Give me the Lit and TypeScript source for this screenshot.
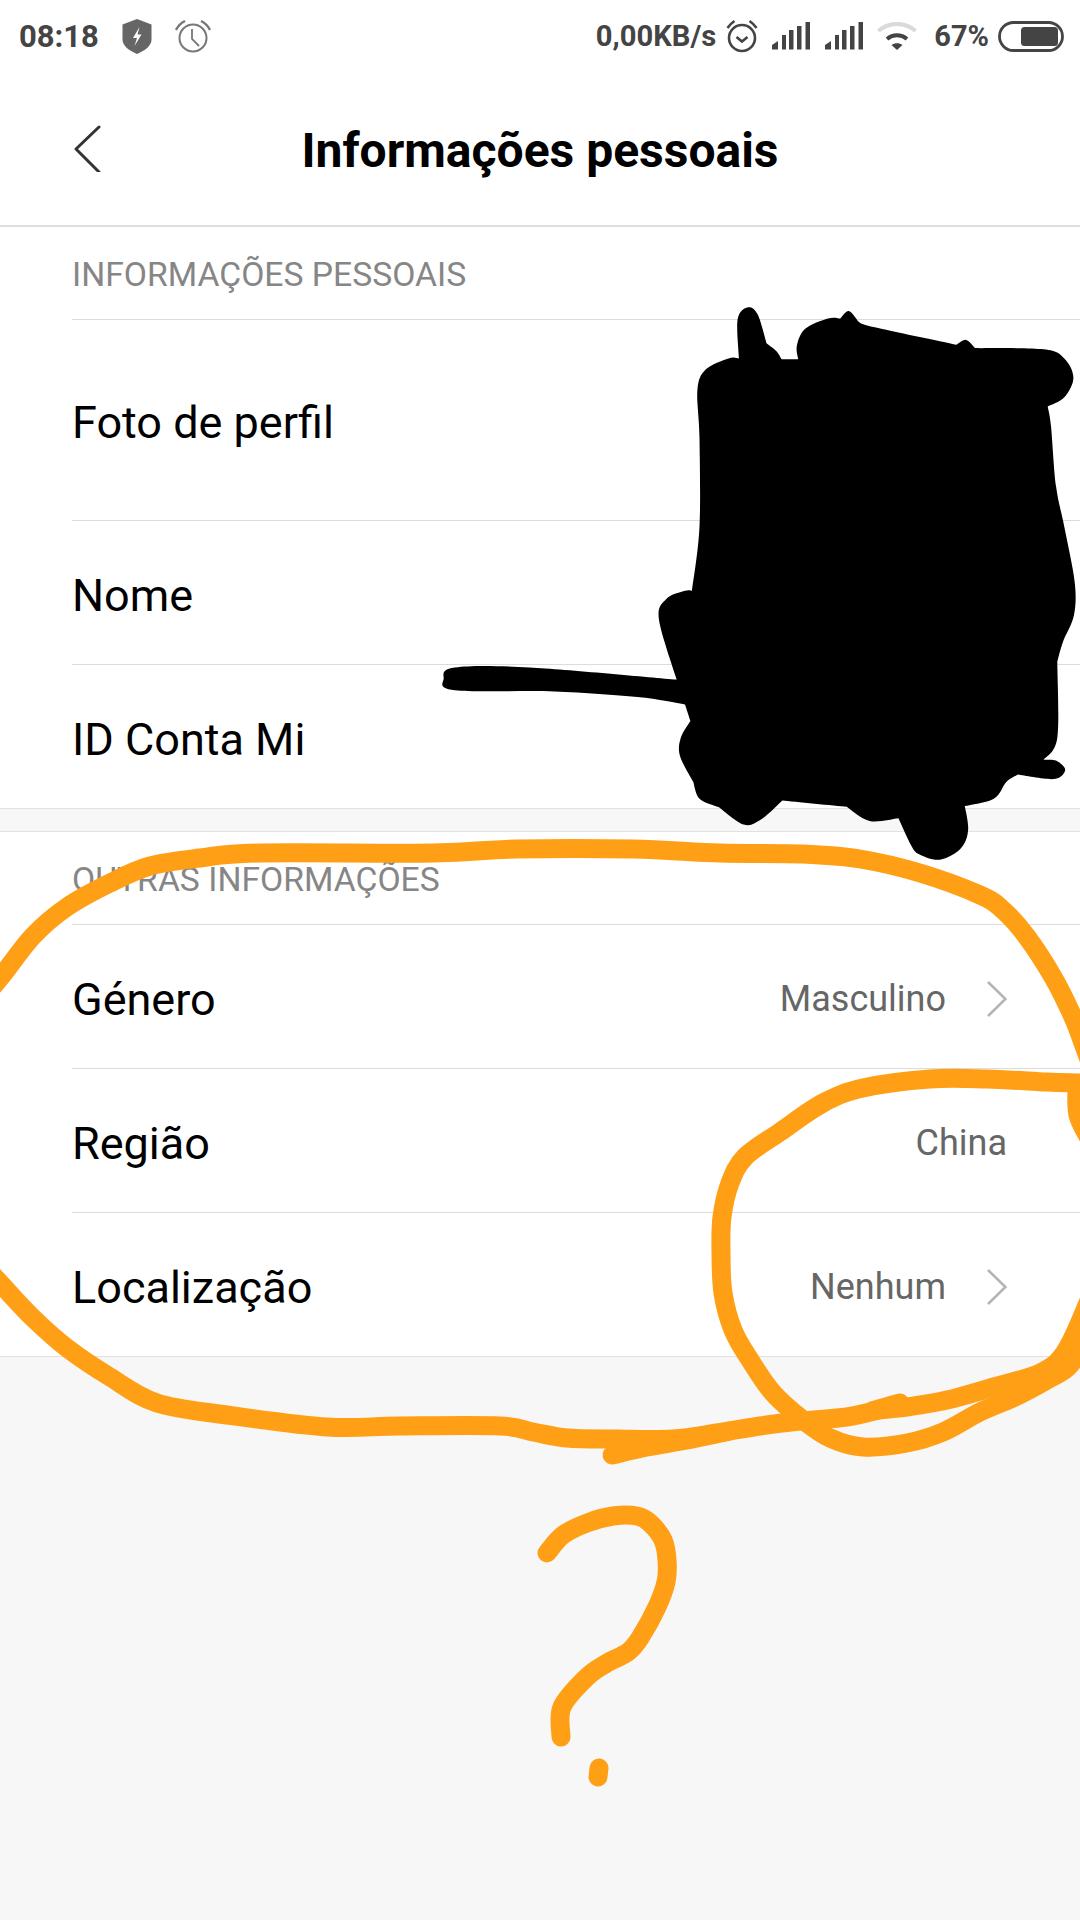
import { LitElement, html, css, svg } from "lit";
import { customElement } from "lit/decorators.js";

type P = [number, number];

function smooth(pts: P[], closed = false, corners: Set<number> = new Set()): string {
  const n = pts.length;
  const idx = (i: number) => (closed ? (i + n) % n : Math.max(0, Math.min(n - 1, i)));
  let d = `M${pts[0][0].toFixed(1)} ${pts[0][1].toFixed(1)}`;
  const last = closed ? n : n - 1;
  for (let i = 0; i < last; i++) {
    const a = idx(i), b = idx(i + 1);
    const p1 = pts[a], p2 = pts[b];
    const p0 = corners.has(a) ? p1 : pts[idx(i - 1)];
    const p3 = corners.has(b) ? p2 : pts[idx(i + 2)];
    const c1x = p1[0] + (p2[0] - p0[0]) / 6, c1y = p1[1] + (p2[1] - p0[1]) / 6;
    const c2x = p2[0] - (p3[0] - p1[0]) / 6, c2y = p2[1] - (p3[1] - p1[1]) / 6;
    d += `C${c1x.toFixed(1)} ${c1y.toFixed(1)} ${c2x.toFixed(1)} ${c2y.toFixed(1)} ${p2[0].toFixed(1)} ${p2[1].toFixed(1)}`;
  }
  return d + (closed ? "Z" : "");
}

const blobRaw: P[] = [
  [745,185],[742,80],[765,47],[790,65],[812,145],[835,165],[848,187],[888,187],[885,150],[905,105],[960,77],[990,77],[1010,57],[1033,85],[1070,100],[1270,148],[1293,135],[1315,157],[1480,160],[1530,185],[1552,237],[1530,290],[1490,315],[1498,370],[1510,530],[1530,640],[1555,790],[1553,880],[1527,950],[1513,1005],[1513,1210],[1480,1270],[1510,1272],[1532,1297],[1505,1322],[1418,1310],[1390,1330],[1360,1375],[1290,1395],[1298,1460],[1280,1510],[1230,1540],[1180,1525],[1160,1500],[1130,1428],[1060,1435],[1005,1397],[850,1380],[800,1430],[757,1445],[697,1398],[650,1375],[635,1330],[603,1260],[605,1210],[628,1165],[615,1120],[500,1100],[300,1085],[60,1082],[33,1050],[60,1020],[240,1020],[595,1053],[552,890],[570,835],[615,813],[632,813],[650,640],[650,400],[645,270],[665,215],[720,185],
];
const cornerPts = ["745,185","812,145","848,187","888,187","990,77","1033,85","1270,148","1315,157","1490,315","1513,1005","1480,1270","1418,1310","1290,1395","1130,1428","1005,1397","850,1380","697,1398","635,1330","628,1165","615,1120","595,1053","632,813"];
const blobCorners = new Set<number>(
  blobRaw.map((p, i) => (cornerPts.includes(p.join(",")) ? i : -1)).filter((i) => i >= 0)
);
const blob: P[] = blobRaw.map(([x, y]) => [430 + x / 2.412, 290 + y / 2.703] as P);

const strokes: P[][] = [
  // big loop top
  [[-30,1012],[0,978],[33,936],[67,907],[110,883],[150,866],[200,858],[260,853],[433,853],[516,849],[633,849],[720,853],[803,854],[860,859],[920,873],[980,895],[1003,910],[1027,937],[1053,977],[1073,1017],[1083,1043],[1100,1090]],
  // big loop bottom
  [[-30,1250],[0,1283],[33,1318],[67,1348],[110,1377],[157,1403],[227,1415],[327,1427],[400,1426],[500,1426],[533,1432],[567,1438],[617,1439],[673,1439],[717,1433],[760,1426],[800,1421],[847,1417],[880,1410],[907,1407],[947,1400],[990,1388],[1040,1373],[1065,1352],[1088,1303],[1100,1270]],
  // tail
  [[612,1455],[647,1447],[687,1440],[730,1431]],
  // bump
  [[872,1411],[900,1403]],
  // small loop
  [[1100,1084],[1080,1083],[1047,1082],[987,1079],[930,1079],[863,1088],[823,1103],[780,1132],[745,1157],[730,1183],[722,1217],[721,1253],[723,1293],[733,1330],[750,1360],[773,1393],[803,1420],[830,1438],[863,1447],[907,1443],[943,1432],[980,1412],[1013,1398],[1047,1380],[1070,1365],[1090,1330],[1105,1290]],
  // right edge piece
  [[1077,1085],[1078,1115],[1090,1140]],
  // question mark
  [[547,1553],[563,1535],[587,1523],[613,1516],[637,1516],[650,1523],[663,1540],[667,1560],[666,1582],[657,1607],[640,1638],[628,1652],[607,1663],[587,1677],[562,1707],[561,1737]],
  [[599,1768],[598,1777]],
];

@customElement("app-root")
export class AppRoot extends LitElement {
  static styles = css`
    :host {
      display: block;
      position: relative;
      width: 1080px;
      height: 1920px;
      overflow: hidden;
      background: #f7f7f7;
      font-family: Roboto, "Liberation Sans", sans-serif;
      color: #000;
    }
    .top { background: #fff; border-bottom: 2px solid #dedede; box-sizing: border-box; height: 227px; }
    .status {
      display: flex; align-items: center; height: 72px;
      padding: 0 16px 0 19px; color: #444; font-weight: 700; font-size: 29.2px;
    }
    .time { font-size: 31px; }
    .status svg { display: block; flex: none; }
    .spacer { flex: 1; }
    .shield { margin-left: 23px; }
    .alarm { margin-left: 23px; }
    .net { margin-right: 10px; }
    .sig { margin-left: 14px; }
    .wifi { margin-left: 13px; }
    .pct { margin-left: 17px; margin-right: 9px; font-size: 29px; }
    .title-row { position: relative; display: flex; align-items: center; justify-content: center; height: 156px; }
    .back { position: absolute; left: 72px; top: 50px; }
    h1 { margin: 0; font-size: 48px; font-weight: 700; }
    .section { background: #fff; border-bottom: 1px solid #e2e2e2; }
    .section + .section { margin-top: 22px; border-top: 1px solid #e2e2e2; }
    .sec-label {
      margin-left: 72px; height: 93px; box-sizing: border-box; border-bottom: 1px solid #dcdcdc; padding-top: 2px;
      display: flex; align-items: center; font-size: 33.7px; color: #868686;
    }
    .row {
      margin-left: 72px; padding: 5px 73px 0 0; height: 144px; box-sizing: border-box;
      display: flex; align-items: center; justify-content: space-between;
      border-bottom: 1px solid #dcdcdc; font-size: 45px;
    }
    .row.tall { height: 201px; }
    .row:last-child { border-bottom: none; height: 143px; }
    .val { display: flex; align-items: center; gap: 41px; font-size: 36px; color: #666; }
    .val svg { display: block; }
    .marks { position: absolute; left: 0; top: 0; width: 1080px; height: 1920px; pointer-events: none; }
  `;

  private signal() {
    return html`<svg class="sig" width="39" height="28" viewBox="0 0 39 28" fill="#444">
      <path d="M0 27.5V23l6-4v8.5z"/>
      <rect x="10" y="13" width="4" height="14.5"/>
      <rect x="17" y="8" width="4.5" height="19.5"/>
      <rect x="25" y="4" width="4.5" height="23.5"/>
      <rect x="33.5" y="0" width="4.5" height="27.5"/>
    </svg>`;
  }

  private row(label: string, value?: string, arrow = false, tall = false) {
    return html`<div class="row ${tall ? "tall" : ""}">
      <span>${label}</span>
      ${value
        ? html`<span class="val">${value}${arrow
            ? html`<svg width="20" height="36" viewBox="0 0 20 36" fill="none" stroke="#b4b4b4" stroke-width="2.6"><path d="M1 1l17.5 17L1 35"/></svg>`
            : ""}</span>`
        : ""}
    </div>`;
  }

  render() {
    return html`
      <div class="top">
        <div class="status">
          <span class="time">08:18</span>
          <svg class="shield" width="30" height="35" viewBox="0 0 30 35">
            <path fill="#666" d="M15 0l14.500 5.500v15c0 6-6 11-14.500 14.500C6.500 31.500.5 26.500.5 20.500v-15z"/>
            <path fill="#fff" d="M17.500 8l-6.500 11h4l-2.500 8 7-11.500h-4z"/>
          </svg>
          <svg class="alarm" width="36" height="33" viewBox="0 0 36 33" fill="none" stroke="#777">
            <circle cx="18" cy="18" r="13.500" stroke-width="2"/>
            <path stroke-width="1.800" d="M17 9v10l7 7"/>
            <path stroke-width="2.400" d="M1 10c2-4 5-7 9-9M35 10c-2-4-5-7-9-9"/>
          </svg>
          <span class="spacer"></span>
          <span class="net">0,00KB/s</span>
          <svg width="32" height="34" viewBox="0 0 32 34" fill="none" stroke="#444">
            <circle cx="16" cy="19" r="13" stroke-width="2.600"/>
            <path stroke-width="2.600" d="M10.500 18l5.500 4.500 5.500-4.500M1.500 9c2-3 4-5 7-7M30.500 9c-2-3-4-5-7-7"/>
          </svg>
          ${this.signal()}${this.signal()}
          <svg class="wifi" width="40" height="29" viewBox="0 0 40 29" fill="none">
            <path stroke="#dadada" stroke-width="4" d="M1.500 9C12-.500 28-.500 38.500 9"/>
            <path stroke="#444" stroke-width="4" d="M10 17c6-5 14-5 20 0"/>
            <path fill="#444" d="M14.500 23c3-2.500 8-2.500 11 0l-5.500 5z"/>
          </svg>
          <span class="pct">67%</span>
          <svg width="66" height="31" viewBox="0 0 66 31" fill="none">
            <rect x="1.500" y="1.500" width="63" height="28" rx="14" stroke="#444" stroke-width="2.800"/>
            <rect x="23" y="6" width="37" height="19" rx="3.500" fill="#444"/>
          </svg>
        </div>
        <div class="title-row">
          <svg class="back" width="30" height="50" viewBox="0 0 30 50" fill="none" stroke="#333" stroke-width="3" stroke-linecap="round" stroke-linejoin="round">
            <path d="M27 5L4 27l23 23"/>
          </svg>
          <h1>Informações pessoais</h1>
        </div>
      </div>
      <div class="section">
        <div class="sec-label">INFORMAÇÕES PESSOAIS</div>
        ${this.row("Foto de perfil", undefined, false, true)}
        ${this.row("Nome")}
        ${this.row("ID Conta Mi")}
      </div>
      <div class="section">
        <div class="sec-label">OUTRAS INFORMAÇÕES</div>
        ${this.row("Género", "Masculino", true)}
        ${this.row("Região", "China")}
        ${this.row("Localização", "Nenhum", true)}
      </div>
      <svg class="marks" viewBox="0 0 1080 1920">
        <path d=${smooth(blob, true, blobCorners)} fill="#000"/>
        ${strokes.map(
          (s) => svg`<path d=${smooth(s)} fill="none" stroke="#ff9f16" stroke-width="19" stroke-linecap="round" stroke-linejoin="round"/>`
        )}
      </svg>
    `;
  }
}
